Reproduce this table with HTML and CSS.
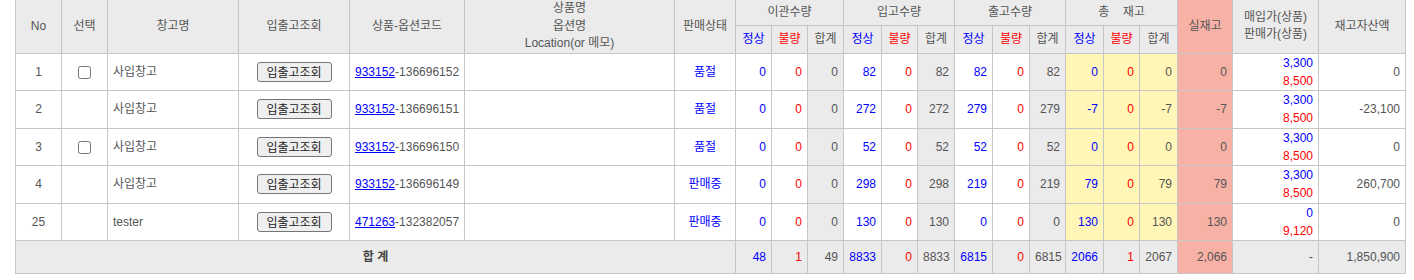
FILE: index.html
```html
<!DOCTYPE html>
<html lang="ko">
<head>
<meta charset="utf-8">
<title>재고 목록</title>
<link rel="stylesheet" href="styles.css">
</head>
<body>
<div class="page">
<table class="grid">
<colgroup>
<col class="c46"><col class="c46"><col class="c131"><col class="c111"><col class="c115"><col class="c210"><col class="c61">
<col class="c36"><col class="c36"><col class="c36">
<col class="c38"><col class="c36"><col class="c37">
<col class="c38"><col class="c37"><col class="c36">
<col class="c38"><col class="c36"><col class="c38">
<col class="c55"><col class="c86"><col class="c87">
</colgroup>
<thead>
<tr class="h1">
<th rowspan="2">No</th>
<th rowspan="2">선택</th>
<th rowspan="2">창고명</th>
<th rowspan="2">입출고조회</th>
<th rowspan="2">상품-옵션코드</th>
<th rowspan="2">상품명<br>옵션명<br>Location(or 메모)</th>
<th rowspan="2">판매상태</th>
<th colspan="3">이관수량</th>
<th colspan="3">입고수량</th>
<th colspan="3">출고수량</th>
<th colspan="3">총&nbsp;&nbsp;&nbsp;&nbsp;재고</th>
<th rowspan="2" class="pink">실재고</th>
<th rowspan="2">매입가(상품)<br>판매가(상품)</th>
<th rowspan="2">재고자산액</th>
</tr>
<tr class="h2">
<th class="b">정상</th><th class="r">불량</th><th>합계</th>
<th class="b">정상</th><th class="r">불량</th><th>합계</th>
<th class="b">정상</th><th class="r">불량</th><th>합계</th>
<th class="b">정상</th><th class="r">불량</th><th>합계</th>
</tr>
</thead>
<tbody>
<tr>
<td class="ctr">1</td><td class="ctr"><input type="checkbox" class="chk"></td><td>사입창고</td>
<td class="ctr"><button class="btn" type="button">입출고조회</button></td>
<td><a href="#" class="lnk">933152</a>-136696152</td><td></td><td class="ctr b">품절</td>
<td class="num b">0</td><td class="num r">0</td><td class="num g">0</td>
<td class="num b">82</td><td class="num r">0</td><td class="num g">82</td>
<td class="num b">82</td><td class="num r">0</td><td class="num g">82</td>
<td class="num b y">0</td><td class="num r y">0</td><td class="num y">0</td>
<td class="num pink">0</td>
<td class="num"><span class="b">3,300</span><br><span class="r">8,500</span></td>
<td class="num">0</td>
</tr>
<tr>
<td class="ctr">2</td><td></td><td>사입창고</td>
<td class="ctr"><button class="btn" type="button">입출고조회</button></td>
<td><a href="#" class="lnk">933152</a>-136696151</td><td></td><td class="ctr b">품절</td>
<td class="num b">0</td><td class="num r">0</td><td class="num g">0</td>
<td class="num b">272</td><td class="num r">0</td><td class="num g">272</td>
<td class="num b">279</td><td class="num r">0</td><td class="num g">279</td>
<td class="num b y">-7</td><td class="num r y">0</td><td class="num y">-7</td>
<td class="num pink">-7</td>
<td class="num"><span class="b">3,300</span><br><span class="r">8,500</span></td>
<td class="num">-23,100</td>
</tr>
<tr>
<td class="ctr">3</td><td class="ctr"><input type="checkbox" class="chk"></td><td>사입창고</td>
<td class="ctr"><button class="btn" type="button">입출고조회</button></td>
<td><a href="#" class="lnk">933152</a>-136696150</td><td></td><td class="ctr b">품절</td>
<td class="num b">0</td><td class="num r">0</td><td class="num g">0</td>
<td class="num b">52</td><td class="num r">0</td><td class="num g">52</td>
<td class="num b">52</td><td class="num r">0</td><td class="num g">52</td>
<td class="num b y">0</td><td class="num r y">0</td><td class="num y">0</td>
<td class="num pink">0</td>
<td class="num"><span class="b">3,300</span><br><span class="r">8,500</span></td>
<td class="num">0</td>
</tr>
<tr>
<td class="ctr">4</td><td></td><td>사입창고</td>
<td class="ctr"><button class="btn" type="button">입출고조회</button></td>
<td><a href="#" class="lnk">933152</a>-136696149</td><td></td><td class="ctr b">판매중</td>
<td class="num b">0</td><td class="num r">0</td><td class="num g">0</td>
<td class="num b">298</td><td class="num r">0</td><td class="num g">298</td>
<td class="num b">219</td><td class="num r">0</td><td class="num g">219</td>
<td class="num b y">79</td><td class="num r y">0</td><td class="num y">79</td>
<td class="num pink">79</td>
<td class="num"><span class="b">3,300</span><br><span class="r">8,500</span></td>
<td class="num">260,700</td>
</tr>
<tr>
<td class="ctr">25</td><td></td><td>tester</td>
<td class="ctr"><button class="btn" type="button">입출고조회</button></td>
<td><a href="#" class="lnk">471263</a>-132382057</td><td></td><td class="ctr b">판매중</td>
<td class="num b">0</td><td class="num r">0</td><td class="num g">0</td>
<td class="num b">130</td><td class="num r">0</td><td class="num g">130</td>
<td class="num b">0</td><td class="num r">0</td><td class="num g">0</td>
<td class="num b y">130</td><td class="num r y">0</td><td class="num y">130</td>
<td class="num pink">130</td>
<td class="num"><span class="b">0</span><br><span class="r">9,120</span></td>
<td class="num">0</td>
</tr>
</tbody>
<tfoot>
<tr>
<td colspan="7" class="ctr total">합 계</td>
<td class="num b">48</td><td class="num r">1</td><td class="num">49</td>
<td class="num b">8833</td><td class="num r">0</td><td class="num">8833</td>
<td class="num b">6815</td><td class="num r">0</td><td class="num">6815</td>
<td class="num b">2066</td><td class="num r">1</td><td class="num">2067</td>
<td class="num pink">2,066</td>
<td class="num">-</td>
<td class="num">1,850,900</td>
</tr>
</tfoot>
</table>
</div>
</body>
</html>
```
FILE: styles.css
```css
html, body {
  margin: 0;
  padding: 0;
  background: #ffffff;
}
body {
  font-family: "Liberation Sans", "Noto Sans CJK KR", sans-serif;
  font-size: 12px;
  color: #555555;
}
.page {
  padding: 0 0 0 15px;
}
.grid {
  border-collapse: collapse;
  table-layout: fixed;
  width: 1391px;
  margin-top: -1px;
}
.grid th,
.grid td {
  border: 1px solid #c6c6c6;
  padding: 0 5px;
  line-height: 18.25px;
  vertical-align: middle;
  white-space: nowrap;
  overflow: hidden;
}
.grid th {
  background: #ebebeb;
  font-weight: normal;
  text-align: center;
  line-height: 17.5px;
}
.grid .h1 th {
  height: 25px;
}
.grid tfoot td {
  background: #ebebeb;
  height: 32px;
}
.c46 { width: 46px; }
.c131 { width: 131px; }
.c111 { width: 111px; }
.c115 { width: 115px; }
.c210 { width: 210px; }
.c61 { width: 61px; }
.c36 { width: 36px; }
.c37 { width: 37px; }
.c38 { width: 38px; }
.c55 { width: 55px; }
.c86 { width: 86px; }
.c87 { width: 87px; }
.ctr { text-align: center; }
.num { text-align: right; }
.b { color: #0000ff; }
.r { color: #ff0000; }
.grid td.g { background: #ebebeb; }
.grid td.y { background: #fff6b7; }
.grid .pink,
.grid tfoot td.pink { background: #f8b1a5; }
.total {
  font-weight: bold;
  color: #444444;
}
.lnk {
  color: #0000ff;
  text-decoration: underline;
}
.chk {
  width: 13px;
  height: 13px;
  margin: 0;
  vertical-align: middle;
}
.btn {
  font-family: "Noto Sans CJK KR", sans-serif;
  font-size: 12px;
  line-height: 16px;
  height: 20px;
  width: 75px;
  padding: 0 4px;
  color: #222222;
  background: #efefef;
  border: 1px solid #767676;
  border-radius: 3px;
  vertical-align: middle;
}
```
